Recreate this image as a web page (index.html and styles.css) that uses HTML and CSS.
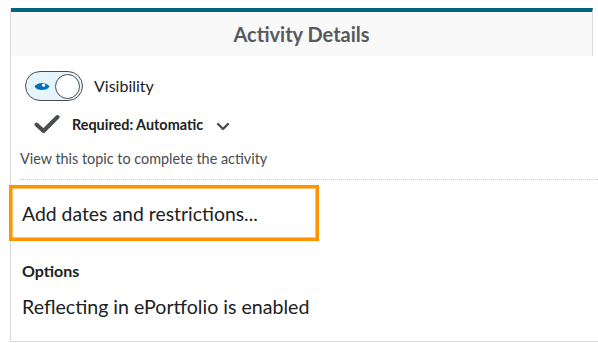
FILE: index.html
```html
<!DOCTYPE html>
<html lang="en">

<head>
    <meta charset="UTF-8">
    <title>Activity Details</title>
    <link rel="stylesheet" href="styles.css">
</head>

<body>
    <div class="panel">
        <div class="panel-head">Activity Details</div>
        <div class="panel-body">
            <div class="top-part">
                <div class="vis-row">
                    <span class="toggle">
                        <svg class="eye" width="16" height="11" viewBox="0 0 16 11">
                            <path d="M0.5 5.5 C3 0.8 13 0.8 15.5 5.5 C13 10.2 3 10.2 0.5 5.5 Z" fill="#006fbf"/>
                            <circle cx="9.6" cy="4.2" r="1.6" fill="#fff"/>
                        </svg>
                        <span class="knob"></span>
                    </span>
                    <span class="vis-label">Visibility</span>
                </div>
                <div class="req-row">
                    <svg class="check" width="26" height="20" viewBox="0 0 26 20">
                        <path d="M2.5 10.5 L9.5 17 L23.5 3" fill="none" stroke="#494c4e" stroke-width="4" stroke-linecap="round" stroke-linejoin="round"/>
                    </svg>
                    <span class="req-label">Required: Automatic</span>
                    <svg class="chev" width="14" height="9" viewBox="0 0 14 9">
                        <path d="M2 2 L7 7 L12 2" fill="none" stroke="#494c4e" stroke-width="2.4" stroke-linecap="round" stroke-linejoin="round"/>
                    </svg>
                </div>
                <p class="hint">View this topic to complete the activity</p>
            </div>
            <div class="dates-btn">Add dates and restrictions...</div>
            <h4 class="opt-title">Options</h4>
            <p class="opt-text">Reflecting in ePortfolio is enabled</p>
        </div>
    </div>
</body>

</html>
```

FILE: styles.css
```css
* {
    padding: 0;
    margin: 0;
    box-sizing: border-box;
}
body {
    background: #fff;
    font-family: Lato, "Noto Sans", sans-serif;
    color: #202122;
}
.panel {
    margin: 8px 0 0 10px;
    height: 334px;
    border-left: 1px solid #d9d9d9;
    border-bottom: 1px solid #d9d9d9;
}
.panel-head {
    height: 48px;
    margin-right: 5px;
    border-top: 4px solid #006680;
    border-right: 1px solid #d9d9d9;
    background: #f9f9f9;
    display: flex;
    align-items: center;
    justify-content: center;
    font-size: 20px;
    font-weight: 700;
    color: #565a5c;
}
.top-part {
    margin-left: 9px;
    padding-bottom: 12px;
    border-bottom: 1px dotted #c8c8c8;
}
.vis-row {
    display: flex;
    align-items: center;
    margin-top: 15px;
    padding-left: 5px;
}
.toggle {
    width: 58px;
    height: 30px;
    border: 1.5px solid #494c4e;
    border-radius: 15px;
    background: #e6f5fd;
    display: flex;
    align-items: center;
    justify-content: space-between;
    padding: 0 2px 0 8px;
}
.knob {
    width: 25px;
    height: 25px;
    border: 1.5px solid #494c4e;
    border-radius: 50%;
    background: #fff;
}
.vis-label {
    margin-left: 11px;
    font-size: 16px;
    margin-top: -2px;
}
.req-row {
    display: flex;
    align-items: center;
    height: 24px;
    margin-top: 11px;
    padding-left: 14px;
}
.req-label {
    margin-left: 12px;
    font-size: 14.4px;
    font-weight: 700;
}
.chev {
    margin-left: 13px;
    margin-top: 5px;
}
.hint {
    margin-top: 14px;
    font-size: 14.4px;
    line-height: 17px;
    color: #494c4e;
}
.dates-btn {
    width: 310px;
    height: 56px;
    margin: 5px 0 0 -2px;
    border: 3px solid #ff9400;
    box-shadow: inset 0 0 0 1px #ffc36b;
    display: flex;
    align-items: center;
    padding-left: 10px;
    font-size: 19.4px;
}
.opt-title {
    margin: 21px 0 0 11px;
    font-size: 16px;
    line-height: 18px;
    font-weight: 700;
}
.opt-text {
    margin: 15px 0 0 11px;
    font-size: 19.6px;
    line-height: 24px;
}
```
